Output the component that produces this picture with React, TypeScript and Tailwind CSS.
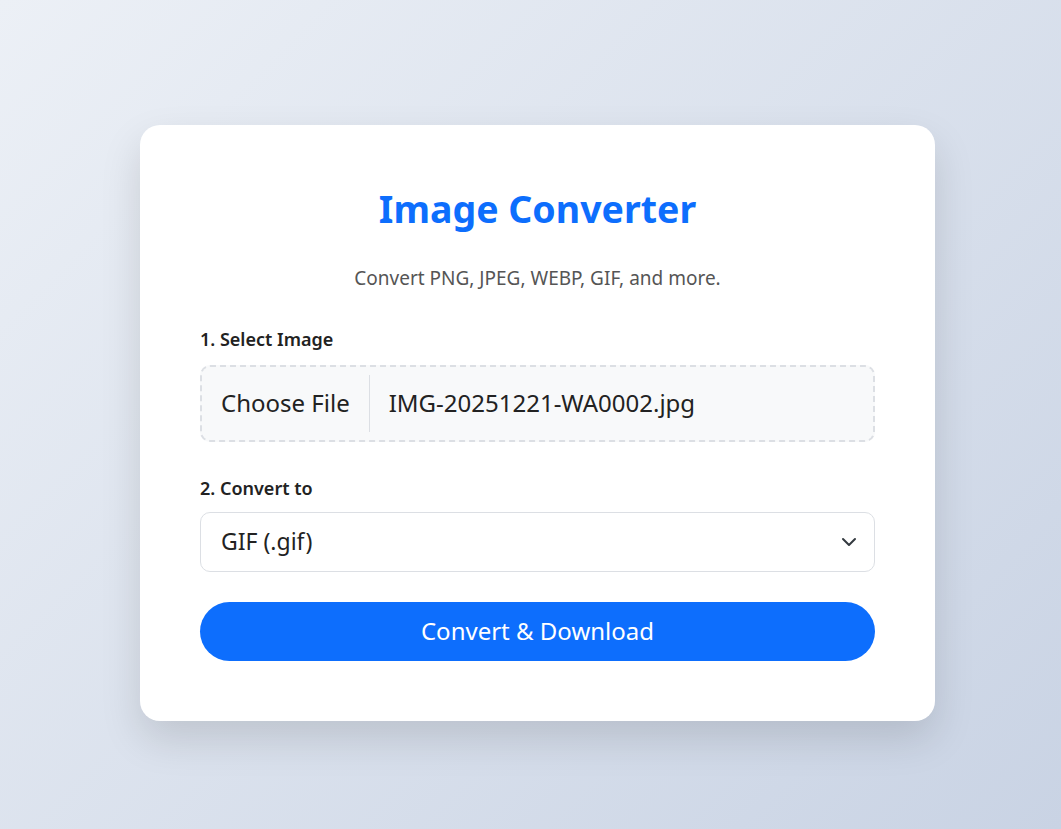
import { ChevronDown } from 'lucide-react';

export default function App() {
  return (
    <div
      className="min-h-screen w-full flex items-center justify-center pl-[14px] pt-[16px] bg-[linear-gradient(135deg,#ecf0f6_0%,#c9d3e4_100%)] text-[#333]"
      style={{ fontFamily: '"Noto Sans", "Open Sans", sans-serif' }}
    >
      <div className="w-[795px] bg-white rounded-[20px] px-[60px] pt-[60px] pb-[60px] shadow-[0_18px_40px_rgba(0,0,0,0.13)]">
        <h1 className="text-center text-[37.5px] leading-[48px] font-bold text-[#0d6efd]">Image Converter</h1>
        <p className="text-center text-[19px] leading-[27px] text-[#555] mt-[32px]">
          Convert PNG, JPEG, WEBP, GIF, and more.
        </p>

        <label className="block mt-[34px] text-[18px] leading-[27px] font-semibold text-[#222]">1. Select Image</label>
        <div className="mt-[12px] h-[77px] flex items-center rounded-[10px] border-2 border-dashed border-[#dcdfe4] bg-[#f8f9fa] px-[10px]">
          <span className="h-[57px] flex items-center pl-[9px] pr-[19px] border-r border-[#dcdfe4] text-[24px] text-[#222]">
            Choose File
          </span>
          <span className="pl-[19px] text-[24px] text-[#222]">IMG-20251221-WA0002.jpg</span>
        </div>

        <label className="block mt-[33px] text-[18px] leading-[27px] font-semibold text-[#222]">2. Convert to</label>
        <div className="mt-[10px] h-[60px] flex items-center justify-between rounded-[10px] border border-[#dcdfe4] bg-white pl-[20px] pr-[13px]">
          <span className="text-[23px] text-[#222]">GIF (.gif)</span>
          <ChevronDown size={24} strokeWidth={2} className="text-[#343a40]" />
        </div>

        <button className="mt-[30px] w-full h-[59px] rounded-full bg-[#0d6efd] text-white text-[24px]">
          Convert &amp; Download
        </button>
      </div>
    </div>
  );
}
